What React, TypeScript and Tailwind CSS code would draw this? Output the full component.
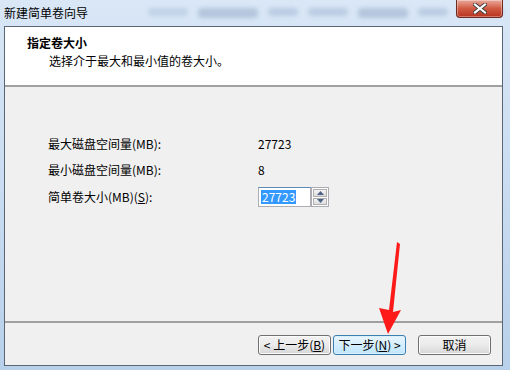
import { ReactNode } from "react";

const font = { fontFamily: '"Noto Sans CJK SC", "DejaVu Sans", sans-serif' };

const WinButton = ({ children, focused = false }: { children: ReactNode; focused?: boolean }) => (
  <div
    className={
      focused
        ? "h-[20px] w-[73px] flex items-center justify-center rounded-[3px] border border-[#3c7fb1] bg-gradient-to-b from-[#eaf6fd] to-[#bee6fd] text-[12px] text-black shadow-[inset_0_0_0_1px_#d9f0fc]"
        : "h-[20px] w-[73px] flex items-center justify-center rounded-[3px] border border-[#707070] bg-gradient-to-b from-[#f2f2f2] via-[#ebebeb] to-[#d6d6d6] text-[12px] text-black shadow-[inset_0_0_0_1px_#fcfcfc]"
    }
  >
    {children}
  </div>
);

export default function App() {
  return (
    <div className="relative w-[510px] h-[370px] overflow-hidden bg-gradient-to-b from-[#d9e7f6] via-[#c9dcf1] to-[#b8d0ea] text-[12px] text-black" style={font}>
      {/* title bar */}
      <div className="h-[26px] flex items-center pl-[4px]">
        <span className="leading-none">新建简单卷向导</span>
        <div className="ml-[60px] flex gap-[10px] opacity-40">
          <div className="w-[40px] h-[8px] rounded bg-[#9fb6d2] blur-[2px]" />
          <div className="w-[60px] h-[10px] rounded bg-[#7f98b8] blur-[2px]" />
          <div className="w-[30px] h-[8px] rounded bg-[#8ea7c6] blur-[2px]" />
          <div className="w-[40px] h-[8px] rounded bg-[#8ea7c6] blur-[2px]" />
          <div className="w-[50px] h-[10px] rounded bg-[#7f98b8] blur-[2px]" />
          <div className="w-[30px] h-[8px] rounded bg-[#8ea7c6] blur-[2px]" />
          <div className="w-[45px] h-[8px] rounded bg-[#8ea7c6] blur-[2px]" />
        </div>
      </div>

      {/* close button */}
      <div className="absolute left-[456px] top-0 w-[47px] h-[18px] rounded-b-[4px] border border-t-0 border-[#6d2a1f] bg-gradient-to-b from-[#e9a99c] via-[#d05a43] to-[#b8321d] flex items-center justify-center shadow-[inset_0_0_0_1px_rgba(255,255,255,0.35)]">
        <svg width="14" height="11" viewBox="0 0 14 11">
          <path d="M2 1.5 L12 9.5 M12 1.5 L2 9.5" stroke="#3b3b3b" strokeWidth="4" strokeLinecap="square" />
          <path d="M2 1.5 L12 9.5 M12 1.5 L2 9.5" stroke="#ffffff" strokeWidth="2.2" strokeLinecap="square" />
        </svg>
      </div>

      {/* client area */}
      <div className="ml-[4px] w-[499px] h-[340px] border border-[#5a6675] flex flex-col bg-[#f0f0f0]">
        {/* header */}
        <div className="h-[60px] bg-white border-b-2 border-[#a0a0a0] pl-[22px] pt-[8px]">
          <div className="font-bold leading-[16px]">指定卷大小</div>
          <div className="pl-[22px] leading-[16px] mt-[2px]">选择介于最大和最小值的卷大小。</div>
        </div>

        {/* body */}
        <div className="flex-1 pl-[43px] pt-[48px]">
          <div className="grid grid-cols-[210px_auto] gap-y-[8px] items-center">
            <div className="leading-[18px]">最大磁盘空间量(MB):</div>
            <div className="leading-[18px]">27723</div>
            <div className="leading-[18px]">最小磁盘空间量(MB):</div>
            <div className="leading-[18px]">8</div>
            <div className="leading-[18px]">简单卷大小(MB)(<span className="underline">S</span>):</div>
            <div className="flex">
              <div className="w-[53px] h-[20px] border border-[#abadb3] border-t-[#5b8ab6] bg-white flex items-center pl-[2px]">
                <span className="bg-[#3399ff] text-white leading-[14px] px-[1px]">27723</span>
              </div>
              <div className="w-[18px] h-[20px] border border-[#abadb3] bg-white flex flex-col p-[1px] gap-[1px]">
                <div className="flex-1 bg-gradient-to-b from-[#f4f4f4] to-[#dcdcdc] border border-[#b0b0b0] flex items-center justify-center">
                  <svg width="7" height="4" viewBox="0 0 7 4"><path d="M0 4 L3.5 0 L7 4 Z" fill="#4d6185" /></svg>
                </div>
                <div className="flex-1 bg-gradient-to-b from-[#f4f4f4] to-[#dcdcdc] border border-[#b0b0b0] flex items-center justify-center">
                  <svg width="7" height="4" viewBox="0 0 7 4"><path d="M0 0 L7 0 L3.5 4 Z" fill="#4d6185" /></svg>
                </div>
              </div>
            </div>
          </div>
        </div>

        {/* footer */}
        <div className="h-[44px] border-t-2 border-[#a0a0a0] flex items-start pt-[12px] pl-[253px] pr-[11px]">
          <WinButton>&lt; 上一步(<span className="underline">B</span>)</WinButton>
          <div className="ml-[2px]">
            <WinButton focused>下一步(<span className="underline">N</span>) &gt;</WinButton>
          </div>
          <div className="ml-auto">
            <WinButton>取消</WinButton>
          </div>
        </div>
      </div>

      {/* red arrow annotation */}
      <svg className="absolute left-0 top-0 pointer-events-none" width="510" height="370" viewBox="0 0 510 370">
        <path d="M397 242 L400 244 L393 312 L401 310 L388 334 L379 308 L389 310 Z" fill="#ff1a1a" />
      </svg>
    </div>
  );
}
